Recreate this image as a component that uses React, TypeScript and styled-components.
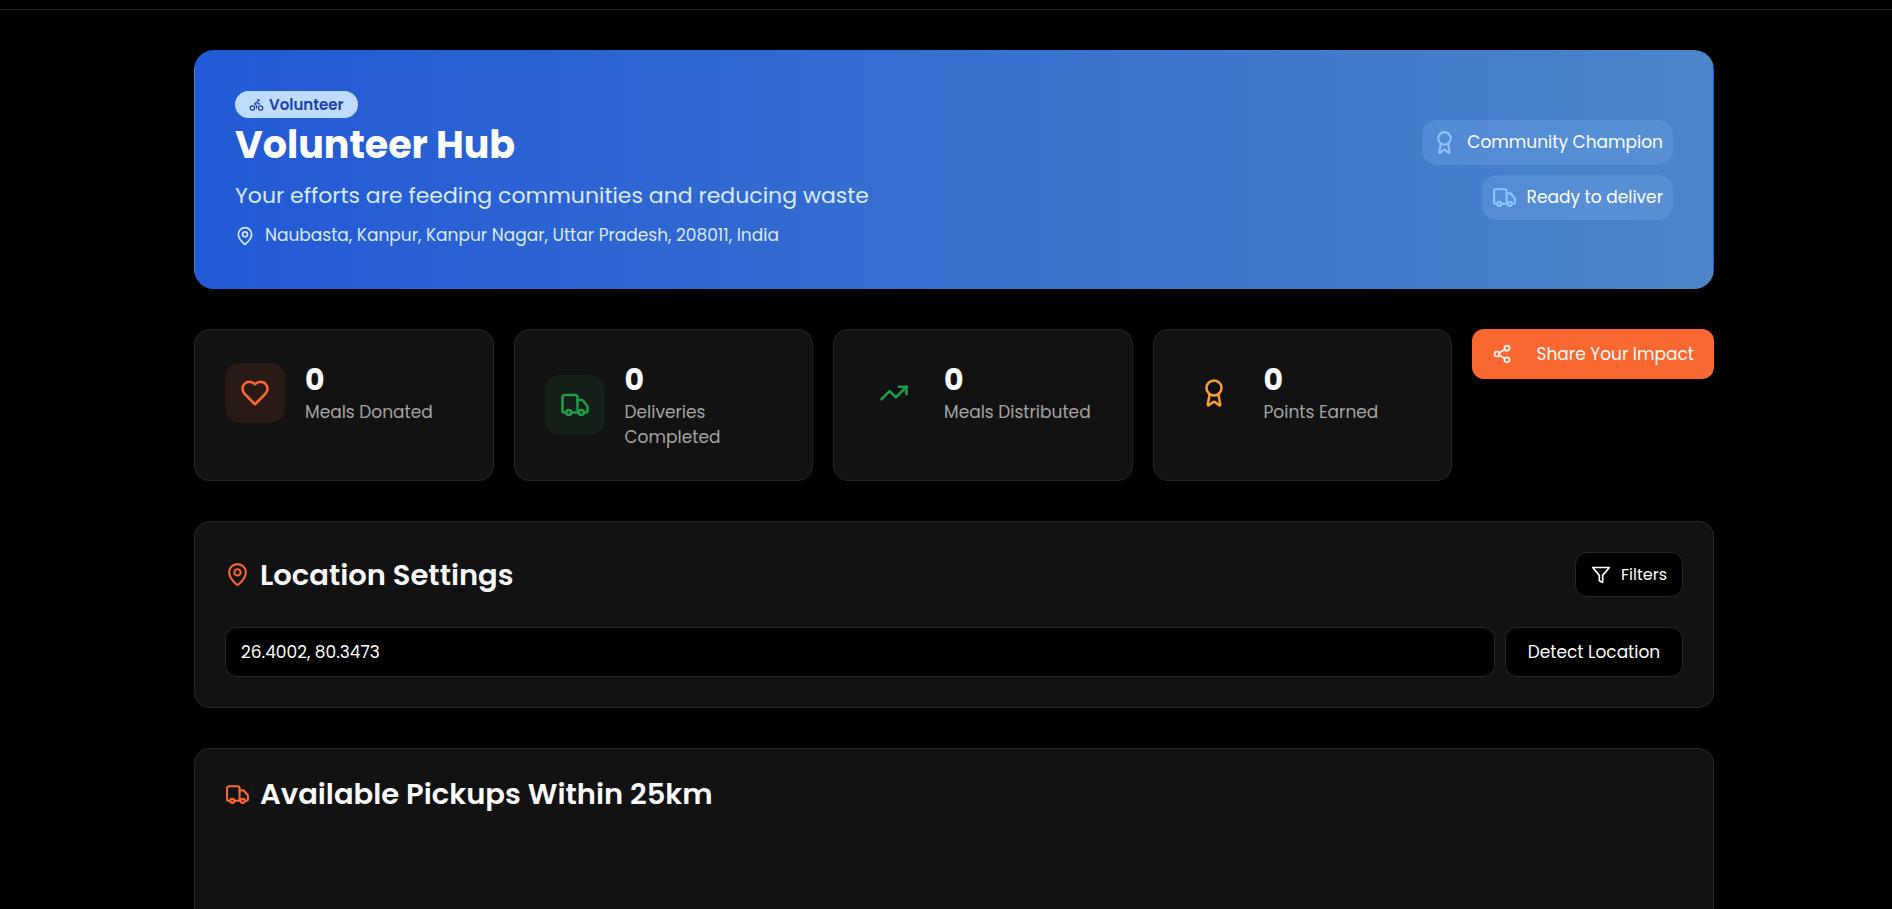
import React from "react";
import styled, { createGlobalStyle } from "styled-components";
import { Award, Bike, MapPin, Share2, TrendingUp, Truck } from "lucide-react";

const GlobalStyle = createGlobalStyle`
  *, *::before, *::after { box-sizing: border-box; }
  body {
    margin: 0;
    background: #000;
    color: #fafafa;
    font-family: Poppins, Inter, "Liberation Sans", sans-serif;
    font-size: 17px;
    line-height: 25px;
  }
  h1, h2, p { margin: 0; }
  button, input { font: inherit; color: inherit; }
  svg { flex-shrink: 0; }
`;

const TopBar = styled.header`
  height: 10px;
  border-bottom: 1px solid #262626;
`;

const Page = styled.main`
  padding: 40px 24px 40px 40px;
`;

const Container = styled.div`
  max-width: 1520px;
  margin: 0 auto;
  display: flex;
  flex-direction: column;
  gap: 40px;
`;

const Hero = styled.section`
  display: flex;
  align-items: center;
  justify-content: space-between;
  gap: 20px;
  padding: 40px;
  border: 1px solid transparent;
  border-radius: 20px;
  background: linear-gradient(90deg, #2259d6, #4c85c9);
`;

const HeroText = styled.div`
  display: flex;
  flex-direction: column;
  align-items: flex-start;
`;

const RoleBadge = styled.span`
  display: inline-flex;
  align-items: center;
  gap: 5px;
  height: 27px;
  padding: 0 14px;
  border-radius: 14px;
  background: #bfdbfe;
  color: #1e40af;
  font-size: 15px;
  font-weight: 600;
`;

const HeroTitle = styled.h1`
  color: #fff;
  font-size: 38px;
  font-weight: 700;
  line-height: 54px;
`;

const HeroSubtitle = styled.p`
  margin-top: 6px;
  color: #dbeafe;
  font-size: 22px;
  line-height: 35px;
`;

const HeroLocation = styled.p`
  display: flex;
  align-items: center;
  gap: 10px;
  margin-top: 10px;
  color: #dbeafe;
`;

const Perks = styled.div`
  display: flex;
  flex-direction: column;
  align-items: flex-end;
  gap: 10px;
`;

const Perk = styled.div`
  display: flex;
  align-items: center;
  gap: 10px;
  padding: 10px;
  border-radius: 15px;
  background: rgba(147, 197, 253, 0.2);
  color: #fff;
  svg { color: #93c5fd; }
`;

const Stats = styled.section`
  display: flex;
  align-items: flex-start;
  gap: 20px;
`;

const StatGrid = styled.div`
  flex: 1;
  display: grid;
  grid-template-columns: repeat(4, 1fr);
  gap: 20px;
`;

const Card = styled.section`
  padding: 30px;
  border: 1px solid #262626;
  border-radius: 15px;
  background: #121212;
`;

const StatRow = styled.div`
  display: flex;
  align-items: center;
  gap: 20px;
`;

const StatIcon = styled.span<{ $color: string; $bg?: string }>`
  display: flex;
  align-items: center;
  justify-content: center;
  flex-shrink: 0;
  width: 60px;
  height: 60px;
  border-radius: 15px;
  color: ${(p) => p.$color};
  background: ${(p) => p.$bg ?? "transparent"};
`;

const StatValue = styled.p`
  font-size: 30px;
  font-weight: 700;
  line-height: 40px;
`;

const StatLabel = styled.p`
  color: #a3a3a3;
`;

const ShareButton = styled.button`
  display: flex;
  align-items: center;
  justify-content: space-between;
  min-width: 242px;
  height: 50px;
  padding: 0 20px;
  border: 0;
  border-radius: 12px;
  background: #f96831;
  color: #fafafa;
`;

const CardHeader = styled.div`
  display: flex;
  align-items: center;
  justify-content: space-between;
`;

const CardTitle = styled.h2`
  display: flex;
  align-items: center;
  gap: 10px;
  font-size: 29px;
  font-weight: 600;
  line-height: 30px;
  svg { color: #f96831; }
`;

const OutlineButton = styled.button<{ $small?: boolean }>`
  display: flex;
  align-items: center;
  justify-content: center;
  gap: 10px;
  min-width: ${(p) => (p.$small ? 107 : 178)}px;
  height: ${(p) => (p.$small ? 45 : 50)}px;
  padding: 0 15px;
  border: 1px solid #262626;
  border-radius: 12px;
  background: #000;
  font-size: ${(p) => (p.$small ? 16 : 17)}px;
  white-space: nowrap;
`;

const LocationForm = styled.div`
  display: flex;
  gap: 10px;
  margin-top: 30px;
`;

const LocationInput = styled.input`
  flex: 1;
  min-width: 0;
  height: 50px;
  padding: 0 15px;
  border: 1px solid #262626;
  border-radius: 12px;
  background: #000;
`;

const PickupCard = styled(Card)`
  min-height: 320px;
`;

const HeartIcon = () => (
  <svg width="30" height="30" viewBox="0 0 24 24" fill="none" stroke="currentColor" strokeWidth="2" strokeLinecap="round" strokeLinejoin="round">
    <path d="M19 14c1.49-1.46 3-3.21 3-5.5A5.5 5.5 0 0 0 16.5 3c-1.76 0-3 .5-4.5 2-1.5-1.5-2.74-2-4.5-2A5.5 5.5 0 0 0 2 8.5c0 2.3 1.5 4.05 3 5.5l7 7Z" />
  </svg>
);

const FilterIcon = () => (
  <svg width="20" height="20" viewBox="0 0 24 24" fill="none" stroke="currentColor" strokeWidth="2" strokeLinecap="round" strokeLinejoin="round">
    <polygon points="22 3 2 3 10 12.46 10 19 14 21 14 12.46 22 3" />
  </svg>
);

const stats = [
  { label: "Meals Donated", value: 0, icon: <HeartIcon />, color: "#f96831", bg: "#291a15" },
  { label: "Deliveries Completed", value: 0, icon: <Truck size={30} />, color: "#1f9d4a", bg: "#141f17" },
  { label: "Meals Distributed", value: 0, icon: <TrendingUp size={30} />, color: "#1f9d4a" },
  { label: "Points Earned", value: 0, icon: <Award size={30} />, color: "#f99f38" },
];

export default function App() {
  return (
    <>
      <GlobalStyle />
      <TopBar />
      <Page>
        <Container>
          <Hero>
            <HeroText>
              <RoleBadge>
                <Bike size={15} />
                Volunteer
              </RoleBadge>
              <HeroTitle>Volunteer Hub</HeroTitle>
              <HeroSubtitle>Your efforts are feeding communities and reducing waste</HeroSubtitle>
              <HeroLocation>
                <MapPin size={20} />
                Naubasta, Kanpur, Kanpur Nagar, Uttar Pradesh, 208011, India
              </HeroLocation>
            </HeroText>
            <Perks>
              <Perk>
                <Award size={25} />
                Community Champion
              </Perk>
              <Perk>
                <Truck size={25} />
                Ready to deliver
              </Perk>
            </Perks>
          </Hero>

          <Stats>
            <StatGrid>
              {stats.map((s) => (
                <Card key={s.label}>
                  <StatRow>
                    <StatIcon $color={s.color} $bg={s.bg}>{s.icon}</StatIcon>
                    <div>
                      <StatValue>{s.value}</StatValue>
                      <StatLabel>{s.label}</StatLabel>
                    </div>
                  </StatRow>
                </Card>
              ))}
            </StatGrid>
            <ShareButton type="button">
              <Share2 size={20} />
              Share Your Impact
            </ShareButton>
          </Stats>

          <Card>
            <CardHeader>
              <CardTitle>
                <MapPin size={25} />
                Location Settings
              </CardTitle>
              <OutlineButton type="button" $small>
                <FilterIcon />
                Filters
              </OutlineButton>
            </CardHeader>
            <LocationForm>
              <LocationInput type="text" aria-label="Location" defaultValue="26.4002, 80.3473" />
              <OutlineButton type="button">Detect Location</OutlineButton>
            </LocationForm>
          </Card>

          <PickupCard>
            <CardTitle>
              <Truck size={25} />
              Available Pickups Within 25km
            </CardTitle>
          </PickupCard>
        </Container>
      </Page>
    </>
  );
}
